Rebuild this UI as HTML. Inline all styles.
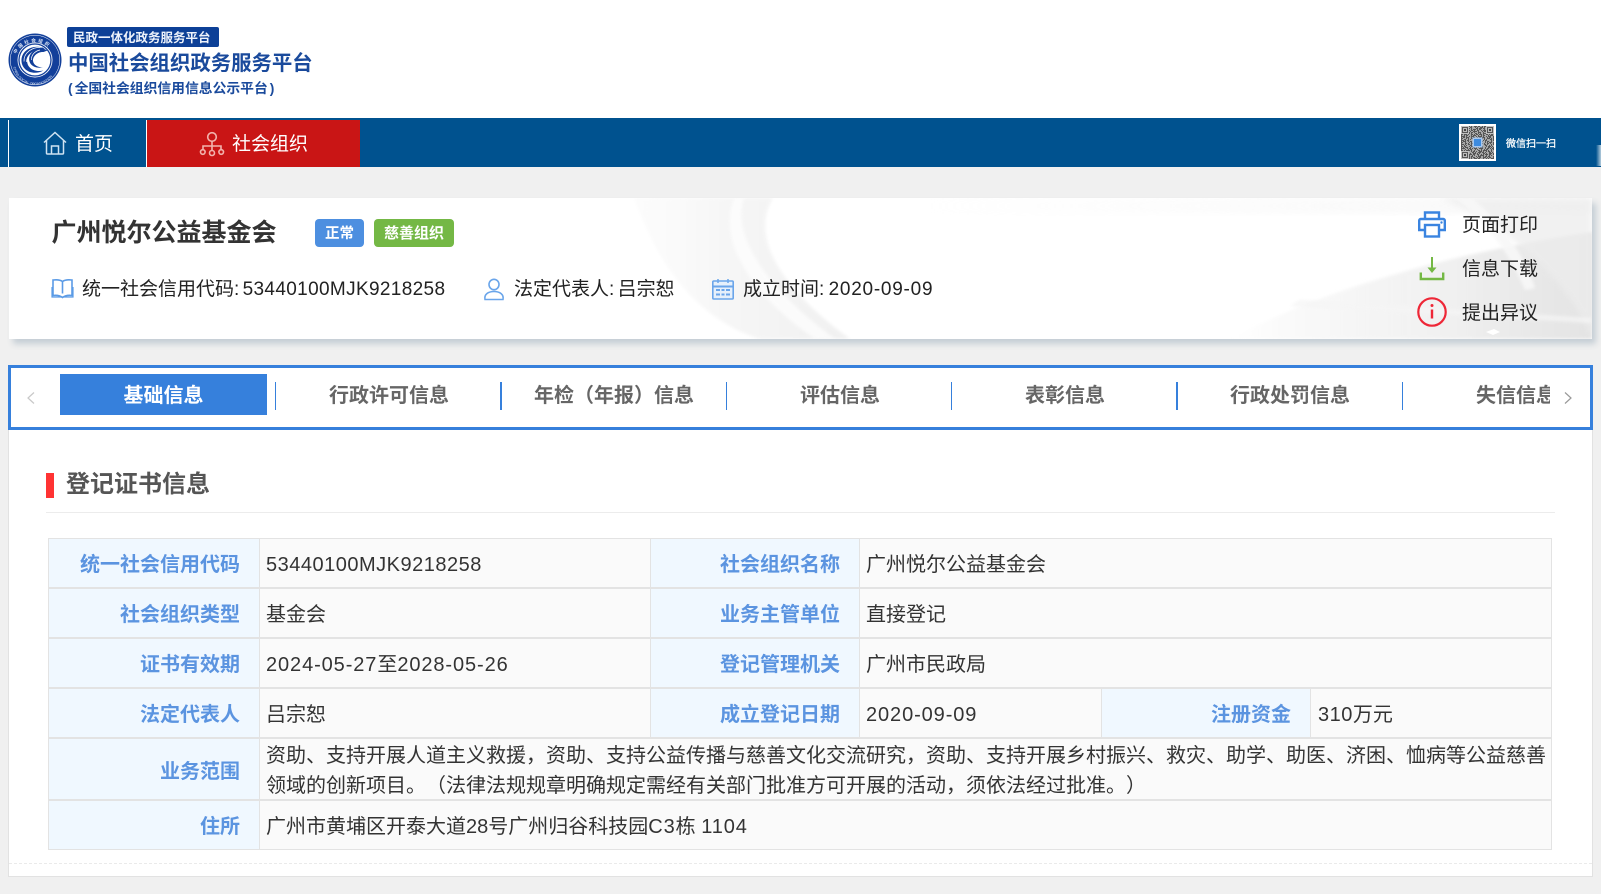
<!DOCTYPE html>
<html lang="zh-CN">
<head>
<meta charset="utf-8">
<title>中国社会组织政务服务平台</title>
<style>
html,body{margin:0;padding:0;width:1601px;height:894px;overflow:hidden;background:#f0f0f0}
body{position:relative;font-family:"Liberation Sans","Noto Sans CJK SC",sans-serif;color:#333;text-spacing-trim:space-all}
.t{position:absolute;white-space:nowrap;line-height:30px;height:30px}
.abs,svg.abs{position:absolute;display:block}
.c{text-align:center;transform:translateX(-50%)}
.tab{font-size:20px;font-weight:bold;color:#666}
.sep{position:absolute;top:382px;width:2px;height:28px;background:#3680dc}
table{position:absolute;left:48px;top:538px;width:1504px;border-collapse:separate;border-spacing:0;table-layout:fixed;border-top:1px solid #e3e3e3;border-left:1px solid #e3e3e3;font-size:20px}
td{padding:4px 0 0 6px;border-right:1px solid #e3e3e3;border-bottom:2px solid #e3e3e3;white-space:nowrap;background:#fafafa;color:#333;line-height:30px}
tr:last-child td{border-bottom-width:1px}
td.l{background:#f0f8ff;color:#5b94e0;font-weight:bold;text-align:right;padding:4px 19px 0 0}
td.r5{padding-top:0}
.r5 div{position:relative;top:2px}
td.l.r5 div{top:3px}
.n{letter-spacing:.5px}
.d{letter-spacing:.9px}
.co{margin-right:-2px}
</style>
</head>
<body>
<!-- header -->
<div class="abs" style="left:0;top:0;width:1601px;height:118px;background:#fff"></div>
<svg class="abs" style="left:8px;top:33px" width="54" height="54" viewBox="0 0 54 54">
  <circle cx="27" cy="27" r="26.500" fill="#123f9a"/>
  <circle cx="27" cy="27" r="24.800" fill="none" stroke="#fff" stroke-width=".5"/>
  <circle cx="27" cy="27" r="17.500" fill="#fff"/>
  <circle cx="27" cy="27" r="16" fill="none" stroke="#123f9a" stroke-width="1.300"/>
  <path d="M37 15.500C26 10.500 13 17 13.500 28c.5 10 12 15 22 9.500-8 2-16-1.500-16.500-9.500C18.500 21 27 15.500 37 15.500z" fill="#123f9a"/>
  <path d="M34 14.500C24 13.500 15.500 20 16 28.500M34 17C26 16.500 18.500 22 18.500 29" fill="none" stroke="#fff" stroke-width=".7"/>
  <path d="M39.500 17.500 33 14.500l-2 1c-7 2-11 7-9.500 13 1.500 5 7 7 13.500 6-5 0-9.500-2.500-10-6.500-.5-5 5-9.500 10.500-9z" fill="#123f9a"/>
  <path d="M32 17c-5 1-9 5-8.500 10" fill="none" stroke="#fff" stroke-width=".7"/>
  <path id="a1" d="M6 30A21 21 0 0 1 48 30" fill="none"/>
  <text font-size="4.600" fill="#dfe7f5" font-weight="bold" font-family="'Liberation Sans','Noto Sans CJK SC',sans-serif"><textPath href="#a1" startOffset="14%" letter-spacing="2">中国社会组织</textPath></text>
  <path id="a2" d="M5 30A22 22 0 0 0 49 30" fill="none"/>
  <text font-size="3.400" fill="#dfe7f5" font-family="'Liberation Sans',sans-serif"><textPath href="#a2" startOffset="6%">CHINA SOCIAL ORGANIZATION</textPath></text>
</svg>
<div class="abs" style="left:67px;top:27px;width:152px;height:20px;background:#0d4097;border-radius:2px"></div>
<div class="t" style="left:73px;top:23px;font-size:12.500px;font-weight:bold;color:#eef3fb">民政一体化政务服务平台</div>
<div class="t" style="left:68px;top:49px;font-size:20.400px;font-weight:bold;color:#1a4a9c">中国社会组织政务服务平台</div>
<div class="t" style="left:68px;top:74px;font-size:13.800px;font-weight:bold;color:#1a4a9c">(<span style="margin-left:2px;margin-right:2px">全国社会组织信用信息公示平台</span>)</div>

<!-- nav -->
<div class="abs" style="left:0;top:118px;width:1601px;height:49px;background:#00528f"></div>
<div class="abs" style="left:8px;top:120px;width:1px;height:47px;background:#fff"></div>
<div class="abs" style="left:146px;top:120px;width:1px;height:47px;background:#fff"></div>
<div class="abs" style="left:147px;top:120px;width:213px;height:47px;background:#c91515"></div>
<svg class="abs" style="left:42px;top:130px" width="26" height="26" viewBox="0 0 26 26" fill="none" stroke="#cfe3f2" stroke-width="1.500"><path d="M2 12.500 13 2.500l11 10M4.500 10.500V23a1 1 0 0 0 1 1h15a1 1 0 0 0 1-1V10.500"/><path d="M9.500 24v-8h7v8"/></svg>
<div class="t" style="left:75px;top:130px;font-size:19px;color:#fff">首页</div>
<svg class="abs" style="left:199px;top:131px" width="26" height="26" viewBox="0 0 26 26" fill="none" stroke="#f2b3ad" stroke-width="1.600"><circle cx="13" cy="6" r="4.300"/><circle cx="3.800" cy="21" r="2.300"/><circle cx="13" cy="22" r="2.500"/><circle cx="22.200" cy="21" r="2.300"/><path d="M13 10.500v9M4 18.500v-3.500h18v3.500"/></svg>
<div class="t" style="left:232px;top:130px;font-size:19px;color:#fff">社会组织</div>
<div class="abs" style="left:1459px;top:124px;width:37px;height:37px;background:#fff"></div>
<svg class="abs" style="left:1461px;top:126px" width="33" height="33" viewBox="0 0 33 33" shape-rendering="crispEdges">
  <rect width="33" height="33" fill="#a8a8a8"/>
  <g fill="none" stroke="#555" stroke-width="1">
    <path d="M0 .5h33" stroke-dasharray="2 1 1 3 2 1 1 2 3 1 2"/>
    <path d="M0 1.500h33" stroke-dasharray="1 2 3 1 1 1 2 3 1 1"/>
    <path d="M0 2.500h33" stroke-dasharray="3 1 2 2 1 1 1 4 2 1"/>
    <path d="M0 3.500h33" stroke-dasharray="1 1 2 3 1 2 1 1 3 1"/>
    <path d="M0 4.500h33" stroke-dasharray="2 2 1 1 3 1 2 1 1 2"/>
    <path d="M0 5.500h33" stroke-dasharray="1 3 1 1 2 1 1 2 4 1"/>
    <path d="M0 6.500h33" stroke-dasharray="3 2 1 2 1 1 2 1 1 3"/>
    <path d="M0 7.500h33" stroke-dasharray="1 1 1 2 4 1 1 3 2 1"/>
    <path d="M0 8.500h33" stroke-dasharray="2 1 3 1 1 2 2 1 1 1"/>
    <path d="M0 9.500h33" stroke-dasharray="1 2 1 1 2 3 1 1 3 2"/>
    <path d="M0 10.500h33" stroke-dasharray="4 1 1 2 1 1 3 2 1 1"/>
    <path d="M0 11.500h33" stroke-dasharray="1 1 2 1 3 2 1 1 2 2"/>
    <path d="M0 12.500h33" stroke-dasharray="2 3 1 1 1 2 3 1 1 1"/>
    <path d="M0 13.500h33" stroke-dasharray="1 2 2 2 1 1 1 3 2 1"/>
    <path d="M0 14.500h33" stroke-dasharray="3 1 1 1 2 4 1 1 2 2"/>
    <path d="M0 15.500h33" stroke-dasharray="1 1 3 2 1 1 2 2 1 3"/>
    <path d="M0 16.500h33" stroke-dasharray="2 2 1 3 1 1 1 1 3 1"/>
    <path d="M0 17.500h33" stroke-dasharray="1 3 2 1 1 2 2 1 1 2"/>
    <path d="M0 18.500h33" stroke-dasharray="3 1 1 2 2 1 1 3 1 1"/>
    <path d="M0 19.500h33" stroke-dasharray="1 2 1 1 1 3 2 2 1 1"/>
    <path d="M0 20.500h33" stroke-dasharray="2 1 2 3 1 1 3 1 1 2"/>
    <path d="M0 21.500h33" stroke-dasharray="1 1 1 1 3 2 1 2 2 1"/>
    <path d="M0 22.500h33" stroke-dasharray="4 2 1 1 2 1 1 1 3 2"/>
    <path d="M0 23.500h33" stroke-dasharray="1 3 1 2 1 1 2 3 1 1"/>
    <path d="M0 24.500h33" stroke-dasharray="2 1 1 1 4 1 1 2 1 3"/>
    <path d="M0 25.500h33" stroke-dasharray="1 2 3 1 1 2 1 1 2 1"/>
    <path d="M0 26.500h33" stroke-dasharray="3 1 2 1 1 3 2 1 1 2"/>
    <path d="M0 27.500h33" stroke-dasharray="1 1 1 3 2 1 1 2 3 1"/>
    <path d="M0 28.500h33" stroke-dasharray="2 2 1 1 1 1 3 1 2 2"/>
    <path d="M0 29.500h33" stroke-dasharray="1 1 4 2 1 2 1 1 1 3"/>
    <path d="M0 30.500h33" stroke-dasharray="3 2 1 1 2 1 2 3 1 1"/>
    <path d="M0 31.500h33" stroke-dasharray="1 1 2 2 3 1 1 1 2 2"/>
    <path d="M0 32.500h33" stroke-dasharray="2 3 1 2 1 1 1 2 3 1"/>
  </g>
  <path d="M0 0h8v8H0zM25 0h8v8h-8zM0 25h8v8H0z" fill="#c0c0c0"/>
  <path d="M1 1h6v6H1zM26 1h6v6h-6zM1 26h6v6H1z" fill="#555"/>
  <path d="M2 2h4v4H2zM27 2h4v4h-4zM2 27h4v4H2z" fill="#bbb"/>
  <path d="M3 3h2v2H3zM28 3h2v2h-2zM3 28h2v2H3z" fill="#444"/>
  <rect x="11.500" y="11.500" width="10" height="10" fill="#a9c8ee"/>
  <rect x="13" y="13" width="7" height="7" fill="#3d8be0"/>
</svg>
<div class="t" style="left:1506px;top:130px;font-size:10px;color:#fff;-webkit-text-stroke:.25px #fff">微信扫一扫</div>
<div class="abs" style="left:1596px;top:145px;width:5px;height:21px;background:linear-gradient(90deg,rgba(255,255,255,0),rgba(225,235,240,.8))"></div>

<!-- summary card -->
<div class="abs" style="left:9px;top:198px;width:1583px;height:141px;background:#fff;box-shadow:4px 5px 6px #c5ced5;overflow:hidden">
  <svg class="abs" style="left:0;top:0" width="1583" height="141" viewBox="9 198 1583 141">
    <defs>
      <linearGradient id="g1" x1="0" x2="1" y1="0" y2="0"><stop offset="0" stop-color="#f8f8f8" stop-opacity=".4"/><stop offset=".5" stop-color="#f5f5f5"/><stop offset="1" stop-color="#f1f1f1"/></linearGradient>
      <linearGradient id="g2" x1="0" x2="1" y1="0" y2="0"><stop offset="0" stop-color="#e6e6e6" stop-opacity="0"/><stop offset=".45" stop-color="#ececec" stop-opacity=".6"/><stop offset="1" stop-color="#e3e3e3"/></linearGradient>
      <linearGradient id="g3" x1="0" x2="1" y1="0" y2="0"><stop offset="0" stop-color="#f0f0f0" stop-opacity="0"/><stop offset="1" stop-color="#eaeaea"/></linearGradient>
      <filter id="b1"><feGaussianBlur stdDeviation="1.500"/></filter>
      <filter id="b2"><feGaussianBlur stdDeviation="3"/></filter>
    </defs>
    <path d="M634 198H773C752 232 772 282 850 339H760C700 320 660 270 634 198Z" fill="url(#g1)" filter="url(#b1)"/>
    <path d="M734 198H744C730 240 775 295 835 339H815C765 305 715 250 734 198Z" fill="#fff" opacity=".7" filter="url(#b1)"/>
    <rect x="900" y="198" width="692" height="16" fill="url(#g3)" opacity=".35" filter="url(#b2)"/>
    <path d="M1230 339C1330 285 1470 250 1592 232V339Z" fill="url(#g2)" filter="url(#b1)"/>
    <path d="M1440 198H1592V339C1570 280 1500 220 1440 198Z" fill="#ededed" opacity=".75" filter="url(#b2)"/>
    <path d="M1455 198C1490 225 1510 255 1525 290L1535 288C1522 250 1500 222 1472 198Z" fill="#f8f8f8" opacity=".9" filter="url(#b1)"/>
    <path d="M1300 300L1592 318V323L1290 306Z" fill="#f5f5f5" opacity=".8" filter="url(#b1)"/>
    <path d="M1486 332l8-3 6 3-7 3z" fill="#fff"/>
  </svg>
</div>
<div class="t" style="left:51.500px;top:218px;font-size:25px;font-weight:bold;color:#333">广州悦尔公益基金会</div>
<div class="abs" style="left:315px;top:219px;width:49px;height:28px;background:#4d8fe0;border-radius:4px"></div>
<div class="t" style="left:325px;top:219px;font-size:14.500px;font-weight:bold;color:#fff">正常</div>
<div class="abs" style="left:374px;top:219px;width:80px;height:28px;background:#74b845;border-radius:4px"></div>
<div class="t" style="left:384px;top:219px;font-size:15px;font-weight:bold;color:#fff">慈善组织</div>

<svg class="abs" style="left:51px;top:278px" width="23" height="22" viewBox="0 0 23 22" fill="none" stroke="#5b9be6" stroke-width="1.600"><path d="M11.500 3.500C9.500 2 6 1.500 2 2v15.500c4-.5 7 0 9.500 2 2.500-2 5.500-2.500 9.500-2V2c-4-.5-7.500 0-9.500 1.500zM11.500 3.500v12"/><path d="M1 9v10h21V9" stroke-width="1.200"/></svg>
<div class="t" style="left:82px;top:275px;font-size:19px;color:#222">统一社会信用代码<span class="co">:</span> <span style="letter-spacing:.35px">53440100MJK9218258</span></div>
<svg class="abs" style="left:483px;top:278px" width="22" height="23" viewBox="0 0 22 23" fill="none" stroke="#6aa5ea" stroke-width="1.600"><ellipse cx="11" cy="6.500" rx="5" ry="5.200"/><path d="M2 21.500c-1-5 3-8 9-8s10 3 9 8z"/></svg>
<div class="t" style="left:514px;top:275px;font-size:19px;color:#222">法定代表人<span class="co">:</span> 吕宗恕</div>
<svg class="abs" style="left:711px;top:278px" width="24" height="22" viewBox="0 0 24 22" fill="none" stroke="#6aa5ea" stroke-width="1.600"><rect x="1.800" y="3" width="20.400" height="18" rx="1" fill="#e6f0fb"/><path d="M1.800 8.500h20.400" stroke-width="2"/><path d="M7 1v4M17 1v4" stroke-width="1.500"/><path d="M5 12h4M10.500 12h3M15 12h4M5 16.500h4M10.500 16.500h3M15 16.500h4" stroke-width="2"/></svg>
<div class="t" style="left:743px;top:275px;font-size:19px;color:#222">成立时间<span style="margin-right:-1px">:</span> <span style="letter-spacing:.75px">2020-09-09</span></div>

<svg class="abs" style="left:1417px;top:210px" width="30" height="28" viewBox="0 0 30 28" fill="none" stroke="#3a84e0" stroke-width="2.400"><path d="M8 9V2.500h14V9"/><path d="M7 20H2.200V10.500a1.500 1.500 0 0 1 1.500-1.500h22.600a1.500 1.500 0 0 1 1.500 1.500V20H23"/><rect x="8" y="15" width="14" height="11.500"/><circle cx="24.500" cy="12.500" r=".7" fill="#3a84e0" stroke-width="1"/></svg>
<div class="t" style="left:1462px;top:211px;font-size:19px;color:#222">页面打印</div>
<svg class="abs" style="left:1419px;top:256px" width="26" height="25" viewBox="0 0 26 25" fill="none" stroke="#74b845"><path d="M13 1v14" stroke-width="2"/><path d="M8.500 11.500h9L13 17z" fill="#74b845" stroke="none"/><path d="M1.800 16.500v6.500h22.400v-6.500" stroke-width="2.400"/></svg>
<div class="t" style="left:1462px;top:255px;font-size:19px;color:#222">信息下载</div>
<svg class="abs" style="left:1417px;top:297px" width="30" height="30" viewBox="0 0 30 30" fill="none" stroke="#ee2737"><circle cx="15" cy="15" r="13.700" stroke-width="2.200"/><path d="M15 12.500v9" stroke-width="2.400"/><circle cx="15" cy="8.500" r="1.500" fill="#ee2737" stroke="none"/></svg>
<div class="t" style="left:1462px;top:299px;font-size:19px;color:#222">提出异议</div>

<!-- main card -->
<div class="abs" style="left:8px;top:420px;width:1583px;height:455px;background:#fff;border:1px solid #e2e2e2"></div>
<div class="abs" style="left:9px;top:863px;width:1583px;height:0;border-top:1px dashed #eaeaea"></div>

<!-- tabs -->
<div class="abs" style="left:8px;top:365px;width:1579px;height:59px;background:#fff;border:3px solid #3680dc"></div>
<svg class="abs" style="left:26px;top:391px" width="10" height="14" viewBox="0 0 10 14" fill="none" stroke="#c8c8c8" stroke-width="1.200"><path d="M8 1.500 2 7l6 5.500"/></svg>
<div class="abs" style="left:60px;top:374px;width:207px;height:41px;background:#3680dc"></div>
<div class="t tab c" style="left:163.500px;top:381px;color:#fff">基础信息</div>
<div class="sep" style="left:275px;width:1px"></div>
<div class="t tab c" style="left:389px;top:381px">行政许可信息</div>
<div class="sep" style="left:500px"></div>
<div class="t tab c" style="left:614px;top:381px">年检（年报）信息</div>
<div class="sep" style="left:726px;width:1px"></div>
<div class="t tab c" style="left:840px;top:381px">评估信息</div>
<div class="sep" style="left:951px;width:1px"></div>
<div class="t tab c" style="left:1065px;top:381px">表彰信息</div>
<div class="sep" style="left:1176px"></div>
<div class="t tab c" style="left:1290px;top:381px">行政处罚信息</div>
<div class="sep" style="left:1402px;width:1px"></div>
<div class="abs" style="left:1476px;top:381px;width:74px;height:30px;overflow:hidden"><div class="t tab" style="left:0;top:0">失信信息</div></div>
<svg class="abs" style="left:1563px;top:391px" width="10" height="14" viewBox="0 0 10 14" fill="none" stroke="#999" stroke-width="1.200"><path d="M2 1.500 8 7l-6 5.500"/></svg>

<!-- section title -->
<div class="abs" style="left:46px;top:473px;width:8px;height:25px;background:#f33"></div>
<div class="t" style="left:66px;top:470px;font-size:24px;font-weight:bold;color:#555">登记证书信息</div>
<div class="abs" style="left:46px;top:512px;width:1509px;height:1px;background:#ececec"></div>

<!-- table -->
<table>
<colgroup><col style="width:211px"><col style="width:391px"><col style="width:209px"><col style="width:242px"><col style="width:209px"><col style="width:241px"></colgroup>
<tr style="height:50px"><td class="l">统一社会信用代码</td><td><span class="n">53440100MJK9218258</span></td><td class="l">社会组织名称</td><td colspan="3">广州悦尔公益基金会</td></tr>
<tr style="height:50px"><td class="l">社会组织类型</td><td>基金会</td><td class="l">业务主管单位</td><td colspan="3">直接登记</td></tr>
<tr style="height:50px"><td class="l">证书有效期</td><td><span class="d">2024-05-27</span>至<span class="d">2028-05-26</span></td><td class="l">登记管理机关</td><td colspan="3">广州市民政局</td></tr>
<tr style="height:50px"><td class="l">法定代表人</td><td>吕宗恕</td><td class="l">成立登记日期</td><td><span class="d">2020-09-09</span></td><td class="l">注册资金</td><td style="padding-left:7px"><span class="n">310</span>万元</td></tr>
<tr style="height:62px"><td class="l r5"><div>业务范围</div></td><td colspan="5" class="r5"><div>资助、支持开展人道主义救援，资助、支持公益传播与慈善文化交流研究，资助、支持开展乡村振兴、救灾、助学、助医、济困、恤病等公益慈善<br>领域的创新项目。（法律法规规章明确规定需经有关部门批准方可开展的活动，须依法经过批准。）</div></td></tr>
<tr style="height:49px"><td class="l">住所</td><td colspan="5">广州市黄埔区开泰大道28号广州归谷科技园<span class="d">C3</span>栋 <span class="d">1104</span></td></tr>
</table>
</body>
</html>
